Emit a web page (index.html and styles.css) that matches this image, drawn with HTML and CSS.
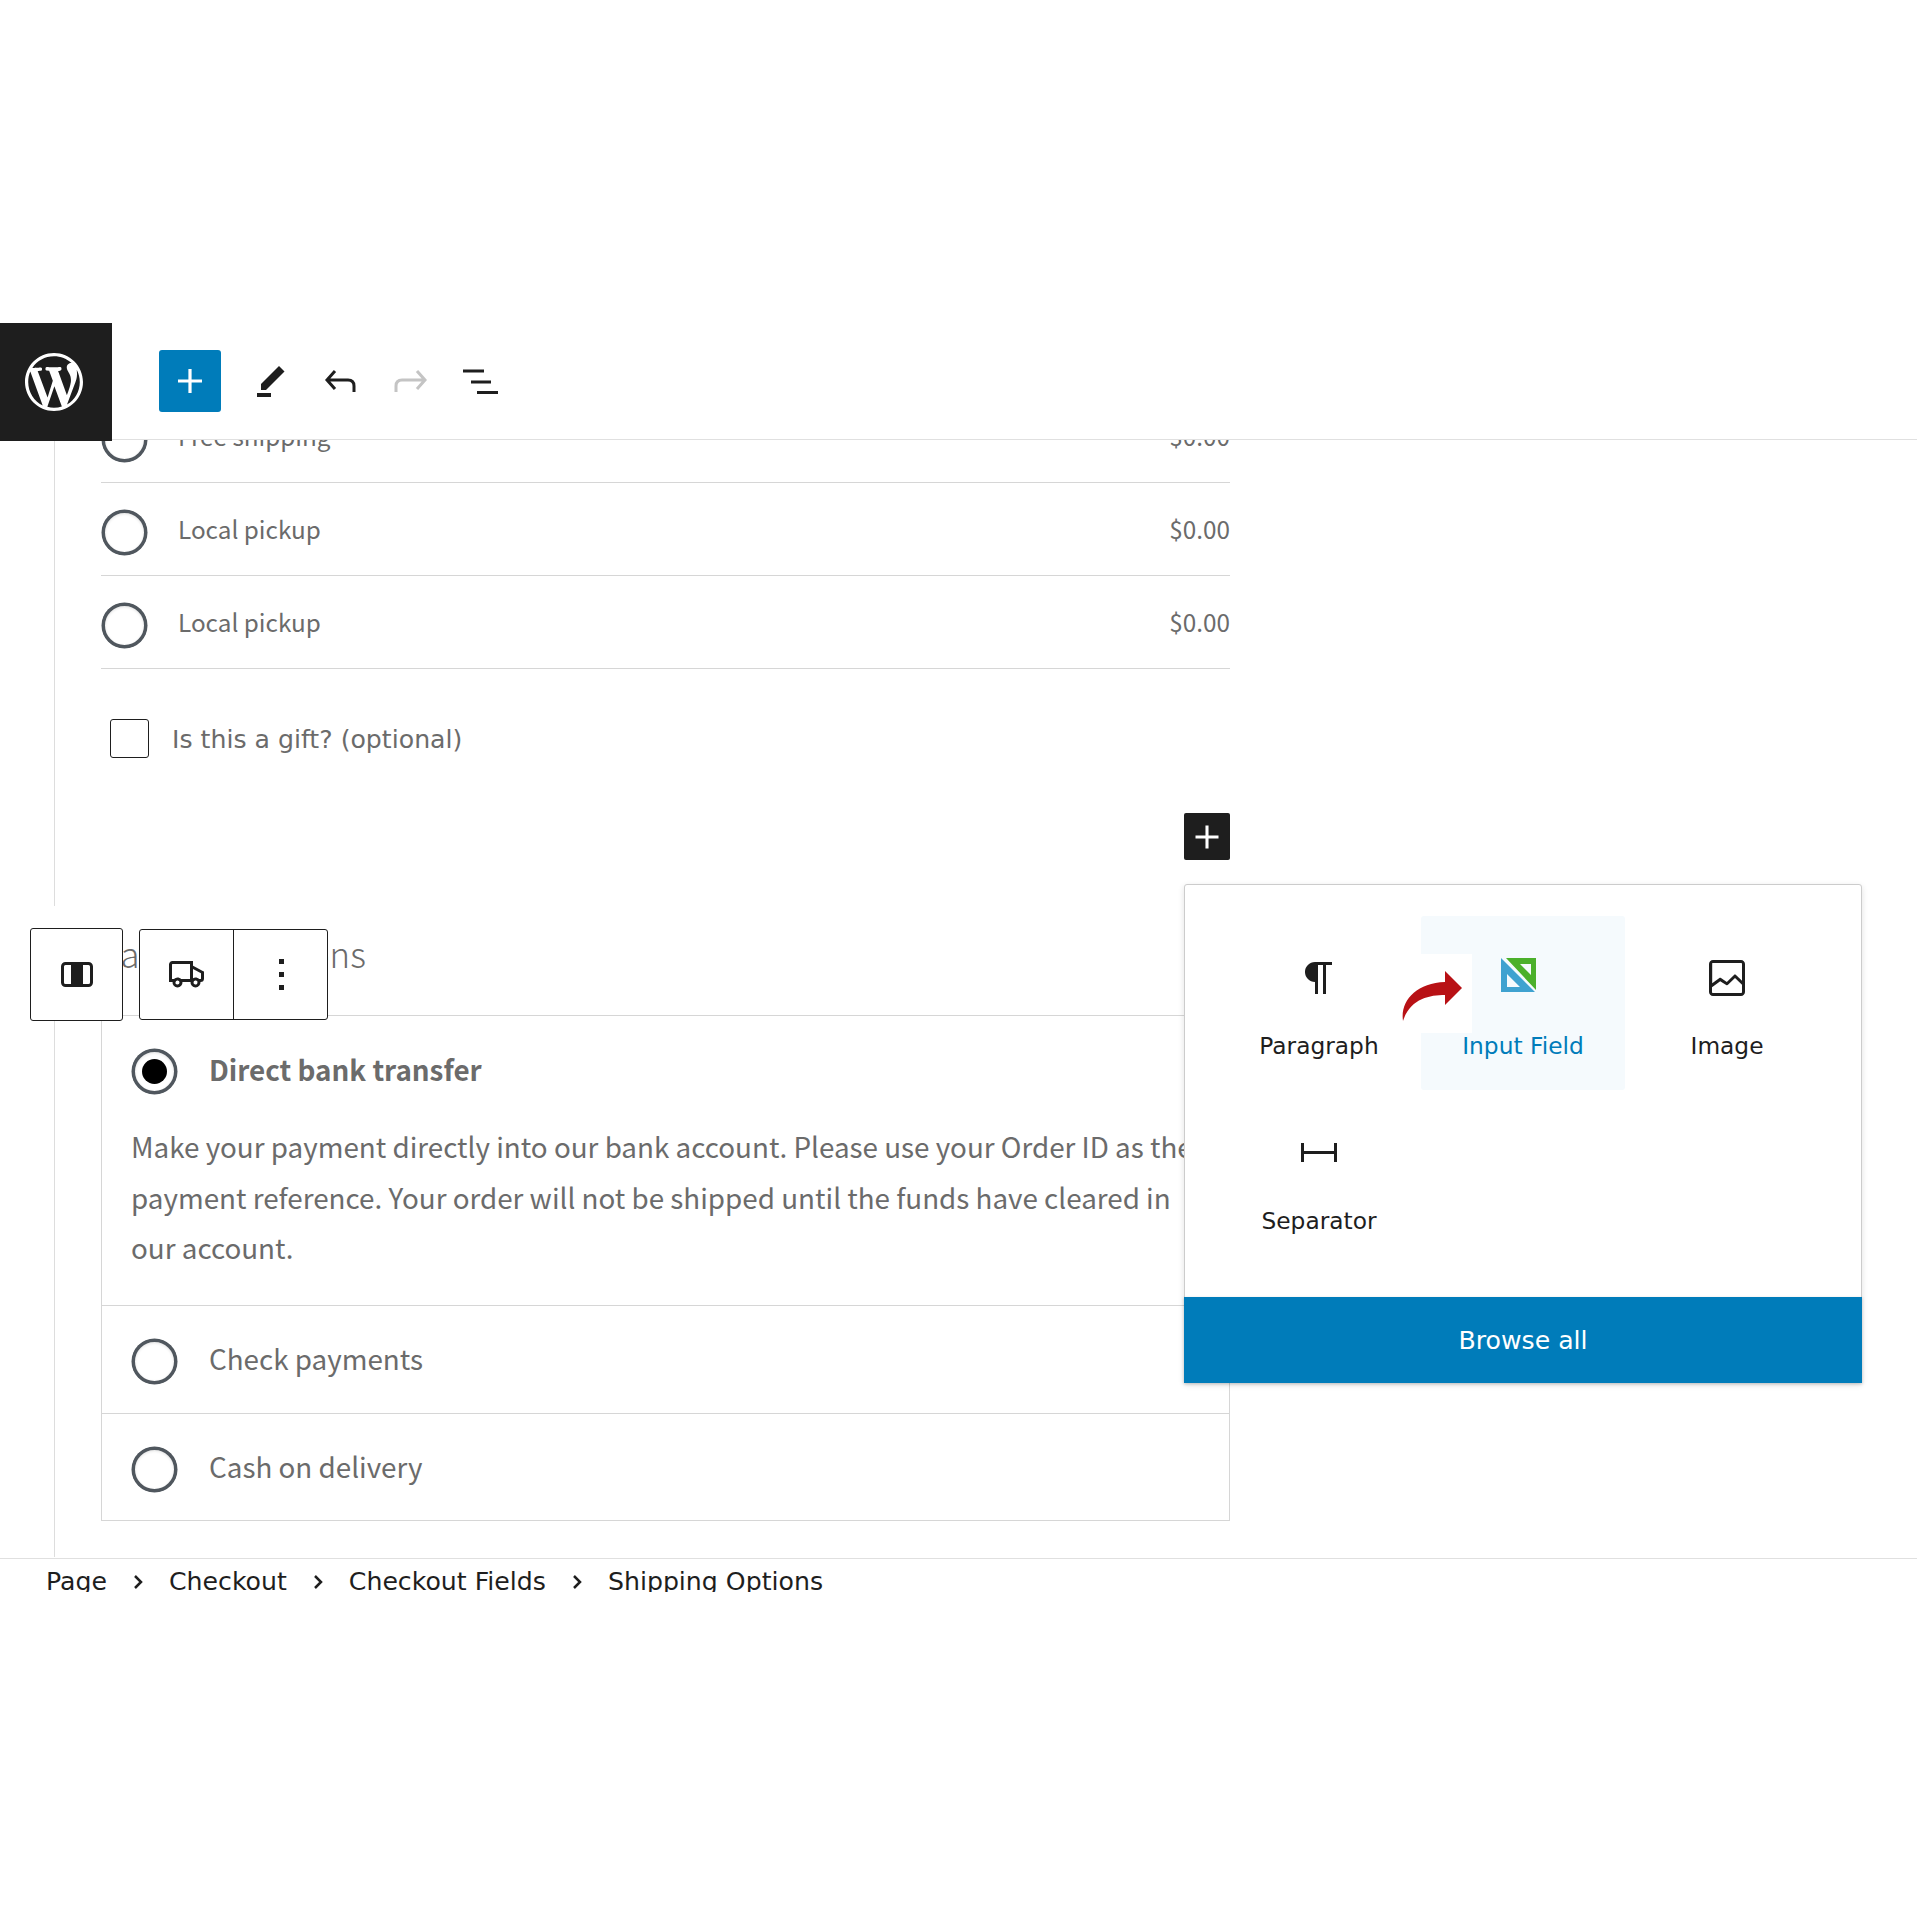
FILE: index.html
```html
<!DOCTYPE html>
<html lang="en">

<head>
    <meta charset="UTF-8">
    <title>Edit Page - Checkout</title>
    <link rel="stylesheet" href="styles.css">
</head>

<body>
    <div class="editor">

        <header class="topbar">
            <a class="wp-logo">
                <svg viewBox="0 0 20 20" width="58" height="58" fill="#fff"><path d="M20 10c0-5.51-4.49-10-10-10C4.48 0 0 4.49 0 10c0 5.52 4.48 10 10 10 5.51 0 10-4.48 10-10zM7.78 15.37L4.37 6.22c.55-.02 1.17-.08 1.17-.08.5-.06.44-1.13-.06-1.11 0 0-1.45.11-2.37.11-.18 0-.37 0-.58-.01C4.12 2.69 6.87 1.11 10 1.11c2.33 0 4.45.87 6.05 2.34-.68-.11-1.65.39-1.65 1.58 0 .74.45 1.36.9 2.1.35.61.55 1.36.55 2.46 0 1.49-1.4 5-1.4 5l-3.03-8.37c.54-.02.82-.17.82-.17.5-.05.44-1.25-.06-1.22 0 0-1.44.12-2.38.12-.87 0-2.33-.12-2.33-.12-.5-.03-.56 1.2-.06 1.22l.92.08 1.26 3.41zM17.41 10c.24-.64.74-1.87.43-4.25.7 1.29 1.05 2.71 1.05 4.25 0 3.29-1.73 6.24-4.4 7.78.97-2.59 1.94-5.2 2.92-7.78zM6.1 18.09C3.12 16.65 1.11 13.53 1.11 10c0-1.3.23-2.48.72-3.59C3.25 10.3 4.67 14.2 6.1 18.09zm4.03-6.63l2.58 6.98c-.86.29-1.76.45-2.71.45-.79 0-1.57-.11-2.29-.33.81-2.38 1.62-4.74 2.42-7.1z"/></svg>
            </a>
            <div class="tools">
                <button class="inserter">
                    <svg viewBox="0 0 24 24" width="48" height="48" fill="#fff"><path d="M18 11.2h-5.2V6h-1.6v5.2H6v1.6h5.2V18h1.6v-5.2H18z"/></svg>
                </button>
                <svg class="tool" viewBox="0 0 48 48" width="48" height="48" fill="#1e1e1e"><path d="M16 33V27L34 9l5.500 5.500L21 33z"/><path d="M12 36h14v4H12z"/></svg>
                <svg class="tool" viewBox="0 0 48 48" width="48" height="48" fill="none" stroke="#1e1e1e" stroke-width="3"><path d="M20 14l-8 9 8 9M12 23h21c4 0 6 2.500 6 6v6"/></svg>
                <svg class="tool tool-redo" viewBox="0 0 48 48" width="48" height="48" fill="none" stroke="#c4c4c4" stroke-width="3"><path d="M32 14l8 9-8 9M40 23H17c-4 0-6 2.500-6 6v6"/></svg>
                <svg class="tool" viewBox="0 0 48 48" width="48" height="48" fill="none" stroke="#1e1e1e" stroke-width="3"><path d="M9 14h21M17 25h20M23 35.500h21"/></svg>
            </div>
        </header>

        <main class="canvas">

            <section class="shipping">
                <div class="rate">
                    <span class="radio"></span>
                    <span class="rate-name">Free shipping</span>
                    <span class="rate-price">$0.00</span>
                </div>
                <div class="rate">
                    <span class="radio"></span>
                    <span class="rate-name">Local pickup</span>
                    <span class="rate-price">$0.00</span>
                </div>
                <div class="rate">
                    <span class="radio"></span>
                    <span class="rate-name">Local pickup</span>
                    <span class="rate-price">$0.00</span>
                </div>
                <label class="gift">
                    <span class="checkbox"></span>
                    <span class="gift-text">Is this a gift? (optional)</span>
                </label>
                <div class="add-row">
                    <button class="add-block">
                        <svg viewBox="0 0 24 24" width="48" height="48" fill="#fff"><path d="M18 11.2h-5.2V6h-1.6v5.2H6v1.6h5.2V18h1.6v-5.2H18z"/></svg>
                    </button>
                </div>
            </section>

            <h2 class="payment-title">Payment options</h2>

            <section class="payment">
                <div class="methods">
                    <div class="method method-open">
                        <div class="method-head">
                            <span class="radio radio-on"></span>
                            <strong>Direct bank transfer</strong>
                        </div>
                        <p>Make your payment directly into our bank account. Please use your Order ID as the payment reference. Your order will not be shipped until the funds have cleared in our account.</p>
                    </div>
                    <div class="method">
                        <div class="method-head">
                            <span class="radio"></span>
                            <span class="method-name">Check payments</span>
                        </div>
                    </div>
                    <div class="method">
                        <div class="method-head">
                            <span class="radio"></span>
                            <span class="method-name">Cash on delivery</span>
                        </div>
                    </div>
                </div>
            </section>

            <div class="block-toolbar">
                <div class="tb-group tb-single">
                    <svg viewBox="0 0 32 25" width="32" height="25"><rect x="1.500" y="1.500" width="29" height="22" rx="3" fill="none" stroke="#1e1e1e" stroke-width="3"/><rect x="10" y="2" width="12" height="21" fill="#1e1e1e"/></svg>
                </div>
                <div class="tb-group tb-double">
                    <div class="tb-cell">
                        <svg viewBox="0 0 24 24" width="48" height="48" fill="#1e1e1e"><path fill-rule="evenodd" d="M3 6.75C3 5.784 3.784 5 4.750 5H15V7.313l.05.027 5.056 2.730.394.212v3.468a1.750 1.750 0 01-1.750 1.750h-.012a2.500 2.500 0 11-4.975 0H9.737a2.500 2.500 0 11-4.975 0H3V6.750zM13.500 14V6.500H4.750a.25.25 0 00-.25.25V14h.965a2.493 2.493 0 011.785-.75c.7 0 1.332.287 1.785.75H13.500zm4.535 0h.715a.25.25 0 00.25-.25v-2.573l-4-2.160v4.568a2.487 2.487 0 011.250-.335c.7 0 1.332.287 1.785.75zM6.282 15.500a1.002 1.002 0 00.968 1.250 1 1 0 10-.968-1.250zm9 0a1 1 0 101.937.498 1 1 0 00-1.938-.498z"/></svg>
                    </div>
                    <div class="tb-cell tb-dots">
                        <i></i><i></i><i></i>
                    </div>
                </div>
            </div>

            <div class="popover">
                <div class="block-grid">
                    <div class="block-item">
                        <svg viewBox="0 0 24 24" width="48" height="48" fill="#1e1e1e"><path d="m9.996 14v-.225l.004.0001v6.225h1.500v-14.500h2.500v14.500h1.500v-14.500h3v-1.500h-8.504c-2.761 0-5 2.239-5 5 0 2.761 2.239 5 5 5z"/></svg>
                        <span>Paragraph</span>
                    </div>
                    <div class="block-item block-item-on">
                        <svg viewBox="0 0 48 48" width="48" height="48"><path fill-rule="evenodd" fill="#3fa2d0" d="M2 4 36 38H2zM8 20v13h13z"/><path fill-rule="evenodd" fill="#4bb02b" d="M7 4H37V36zM21 10 32 21V10z"/></svg>
                        <span>Input Field</span>
                        <div class="patch"></div>
                        <svg class="arrow" viewBox="0 0 60 50" width="60" height="50"><path fill="#b81115" d="M43 0 60 17 43 34V24C27 24 8 28 1 50 -2 30 14 12 43 11z"/></svg>
                    </div>
                    <div class="block-item">
                        <svg viewBox="0 0 24 24" width="48" height="48" fill="#1e1e1e"><path d="M19 3H5c-1.100 0-2 .9-2 2v14c0 1.100.9 2 2 2h14c1.100 0 2-.9 2-2V5c0-1.100-.9-2-2-2zM5 4.500h14c.3 0 .5.2.5.5v8.400l-3-2.900c-.3-.3-.8-.3-1 0L11.900 14 9 12c-.3-.2-.6-.2-.8 0l-3.600 2.600V5c-.1-.3.1-.5.4-.5zm14 15H5c-.3 0-.5-.2-.5-.5v-2.400l4.100-3 3 1.900c.3.2.7.2.9-.1L16 12l3.500 3.400V19c0 .3-.2.5-.5.5z"/></svg>
                        <span>Image</span>
                    </div>
                    <div class="block-item">
                        <svg viewBox="0 0 24 24" width="48" height="48" fill="#1e1e1e"><path d="M4.500 12.500v4H3V7h1.500v3.987h15V7H21v9.500h-1.500v-4h-15Z"/></svg>
                        <span>Separator</span>
                    </div>
                </div>
                <button class="browse-all">Browse all</button>
            </div>

        </main>

        <footer class="crumbs">
            <span>Page</span>
            <svg viewBox="0 0 12 24" width="12" height="24" fill="none" stroke="#1e1e1e" stroke-width="2.500"><path d="M3 6l6 6-6 6"/></svg>
            <span>Checkout</span>
            <svg viewBox="0 0 12 24" width="12" height="24" fill="none" stroke="#1e1e1e" stroke-width="2.500"><path d="M3 6l6 6-6 6"/></svg>
            <span>Checkout Fields</span>
            <svg viewBox="0 0 12 24" width="12" height="24" fill="none" stroke="#1e1e1e" stroke-width="2.500"><path d="M3 6l6 6-6 6"/></svg>
            <span>Shipping Options</span>
        </footer>

    </div>
</body>

</html>
```

FILE: styles.css
```css
* {
    box-sizing: border-box;
}

body {
    margin: 0;
    background-color: #fff;
    font-family: "DejaVu Sans", sans-serif;
    color: #1e1e1e;
}

.editor {
    padding-top: 323px;
    min-height: 1917px;
}

button {
    border: none;
    padding: 0;
    cursor: pointer;
    font-family: inherit;
}

/* top bar */
.topbar {
    height: 117px;
    display: flex;
    border-bottom: 1px solid #e0e0e0;
}

.wp-logo {
    width: 112px;
    height: 118px;
    padding-right: 4px;
    background-color: #1e1e1e;
    display: flex;
    align-items: center;
    justify-content: center;
    position: relative;
    z-index: 2;
}

.tools {
    display: flex;
    align-items: center;
    padding-left: 47px;
    height: 116px;
}

.inserter {
    width: 62px;
    height: 62px;
    border-radius: 3px;
    background-color: #007cba;
    display: flex;
    align-items: center;
    justify-content: center;
    margin-right: 24px;
}

.tool {
    margin-right: 22px;
}

.tool-redo {
    margin-right: 21px;
}

/* canvas */
.canvas {
    position: relative;
    height: 1118px;
    overflow: hidden;
    font-family: "Noto Sans CJK SC", "Noto Sans", sans-serif;
    color: #6b6b6b;
}

.shipping {
    width: 1176px;
    height: 516px;
    margin: -50px 0 0 54px;
    padding-left: 46px;
    border-left: 1px solid #ddd;
}

.rate {
    height: 93px;
    display: flex;
    align-items: center;
    border-bottom: 1px solid #d6d6d6;
    font-size: 24.300px;
}

.radio {
    width: 45px;
    height: 45px;
    margin-left: 1px;
    flex: none;
    border: 3px solid #50575e;
    border-radius: 50%;
    background-color: #fff;
    box-shadow: inset 0 1px 3px rgba(0, 0, 0, 0.12), 0 0 0 0.500px #50575e;
}

.rate .radio {
    margin-top: 6px;
}

.rate-name {
    margin-left: 31px;
    margin-bottom: 2px;
    flex: 1;
}

.rate-price {
    margin-bottom: 2px;
}

.gift {
    display: flex;
    align-items: center;
    margin: 50px 0 0 9px;
    font-family: "DejaVu Sans", sans-serif;
    font-size: 25.200px;
    gap: 23px;
}

.gift-text {
    margin-top: 2px;
}

.checkbox {
    width: 39px;
    height: 39px;
    border: 1px solid #1e1e1e;
    border-radius: 3px;
}

.add-row {
    display: flex;
    justify-content: flex-end;
    margin-top: 55px;
}

.add-block {
    width: 46px;
    height: 47px;
    border-radius: 2px;
    background-color: #1e1e1e;
    display: flex;
    align-items: center;
    justify-content: center;
}

.payment-title {
    width: 1129px;
    height: 110px;
    margin: 0 0 0 101px;
    padding-top: 17px;
    border-bottom: 1px solid #d6d6d6;
    font-size: 34.700px;
    font-weight: 300;
    line-height: 60px;
}

.payment {
    width: 1176px;
    height: 541px;
    margin-left: 54px;
    padding-left: 46px;
    border-left: 1px solid #ddd;
}

.methods {
    border: 1px solid #d6d6d6;
    border-top: none;
}

.method {
    padding: 0 29px;
    height: 108px;
    border-bottom: 1px solid #d6d6d6;
    font-size: 27.800px;
}

.method:last-child {
    border-bottom: none;
    height: 106px;
}

.method-open {
    height: 290px;
}

.method-head {
    display: flex;
    align-items: center;
    gap: 32px;
    height: 108px;
}

.method-head .radio {
    margin-top: 2px;
}

.method-head strong {
    margin-bottom: 2px;
}

.method-name {
    margin-bottom: 5px;
}

.method p {
    margin: -3px 0 0;
    line-height: 50.500px;
}

.radio-on {
    display: flex;
    align-items: center;
    justify-content: center;
}

.radio-on::after {
    content: "";
    width: 25px;
    height: 25px;
    border-radius: 50%;
    background-color: #000;
}

/* toolbar over the block */
.block-toolbar {
    position: absolute;
    left: 30px;
    top: 488px;
    display: flex;
    align-items: flex-start;
    gap: 16px;
}

.tb-group {
    height: 91px;
    margin-top: 1px;
    display: flex;
    background-color: #fff;
    border: 1px solid #1e1e1e;
    border-radius: 3px;
}

.tb-single {
    width: 93px;
    height: 93px;
    margin-top: 0;
    align-items: center;
    justify-content: center;
}

.tb-double {
    width: 189px;
}

.tb-cell {
    width: 93px;
    display: flex;
    align-items: center;
    justify-content: center;
}

.tb-cell + .tb-cell {
    width: 94px;
    border-left: 1px solid #1e1e1e;
}

.tb-dots {
    flex-direction: column;
    gap: 8px;
    padding-left: 2px;
}

.tb-dots i {
    width: 5px;
    height: 5px;
    background-color: #1e1e1e;
}

/* inserter popover */
.popover {
    position: absolute;
    left: 1184px;
    top: 444px;
    width: 678px;
    height: 499px;
    background-color: #fff;
    border: 1px solid #ccc;
    border-radius: 3px;
    box-shadow: 0 2px 6px rgba(0, 0, 0, 0.12);
    color: #1e1e1e;
    font-family: "DejaVu Sans", sans-serif;
    display: flex;
    flex-direction: column;
    justify-content: space-between;
}

.block-grid {
    display: grid;
    grid-template-columns: repeat(3, 204px);
    grid-auto-rows: 174px;
    row-gap: 1px;
    padding: 31px 0 0 32px;
}

.block-item {
    position: relative;
    display: flex;
    flex-direction: column;
    align-items: center;
    padding-top: 38px;
    gap: 30px;
    font-size: 23.300px;
    line-height: 28px;
    border-radius: 3px;
}

.block-item span {
    white-space: nowrap;
}

.block-item-on {
    background-color: #f5fafd;
    color: #007cba;
}

.patch {
    position: absolute;
    left: 0;
    top: 38px;
    width: 51px;
    height: 79px;
    background-color: #fff;
}

.arrow {
    position: absolute;
    left: -19px;
    top: 55px;
}

.browse-all {
    height: 86px;
    margin: 0 -1px -1px;
    background-color: #007cba;
    color: #fff;
    font-size: 25.200px;
    box-shadow: 0 1px 3px rgba(0, 0, 0, 0.2);
}

/* breadcrumbs */
.crumbs {
    height: 34px;
    overflow: hidden;
    display: flex;
    align-items: flex-start;
    gap: 25px;
    padding: 5px 0 0 46px;
    border-top: 1px solid #e0e0e0;
    font-size: 25.200px;
    line-height: 36px;
}

.crumbs svg {
    margin-top: 6px;
}
```
